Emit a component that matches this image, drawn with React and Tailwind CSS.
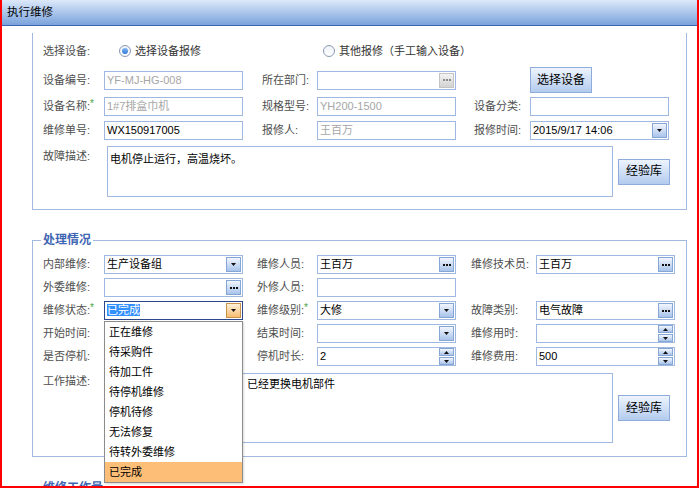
import React from "react";

// options of the open status dropdown
const statusOptions = [
  "正在维修",
  "待采购件",
  "待加工件",
  "待停机维修",
  "停机待修",
  "无法修复",
  "待转外委维修",
  "已完成",
];

function Label({ className = "", star, children }) {
  return (
    <div className={`shrink-0 whitespace-nowrap text-[#4f4f4f] ${className}`}>
      {children}
      {star && (
        <span className="relative -top-[3px] text-[10px] text-[#3fa33f]">*</span>
      )}
    </div>
  );
}

function Tri({ up }) {
  return (
    <svg width="5" height="3" viewBox="0 0 5 3">
      <path d={up ? "M0 3h5L2.5 0z" : "M0 0h5L2.5 3z"} fill="#111" />
    </svg>
  );
}

function DropBtn({ orange }) {
  return (
    <div
      className={`mr-[1px] flex h-[15px] w-[15px] shrink-0 items-center justify-center border ${
        orange
          ? "border-[#c8924a] bg-linear-to-b from-[#fff1d8] to-[#f7bd70]"
          : "border-[#86a6d6] bg-linear-to-b from-[#f2f6fd] to-[#a9c3ea]"
      }`}
    >
      <Tri />
    </div>
  );
}

function DotsBtn({ gray }) {
  return (
    <div
      className={`mr-[1px] flex h-[15px] w-[15px] shrink-0 items-center justify-center gap-[1px] border ${
        gray
          ? "border-[#c4c4c4] bg-linear-to-b from-[#f4f4f4] to-[#d2d2d2]"
          : "border-[#86a6d6] bg-linear-to-b from-[#f2f6fd] to-[#a9c3ea]"
      }`}
    >
      {[0, 1, 2].map((i) => (
        <span
          key={i}
          className={`h-[2px] w-[2px] ${gray ? "bg-[#8a8a8a]" : "bg-[#111]"}`}
        />
      ))}
    </div>
  );
}

function Spin() {
  return (
    <div className="mr-[1px] flex h-[17px] w-[15px] shrink-0 flex-col gap-[1px]">
      <div className="flex flex-1 items-center justify-center border border-[#86a6d6] bg-linear-to-b from-[#f2f6fd] to-[#a9c3ea]">
        <Tri up />
      </div>
      <div className="flex flex-1 items-center justify-center border border-[#86a6d6] bg-linear-to-b from-[#f2f6fd] to-[#a9c3ea]">
        <Tri />
      </div>
    </div>
  );
}

function Field({ value, gray, focused, children, overlay }) {
  return (
    <div
      className={`relative flex h-[19px] w-[139px] shrink-0 items-center border bg-white ${
        focused ? "border-[#2c478c]" : "border-[#9fb8e1]"
      }`}
    >
      <div
        className={`min-w-0 flex-1 truncate pl-[2px] ${
          gray ? "text-[#a6a6a6]" : "text-black"
        }`}
      >
        {value}
      </div>
      {children}
      {overlay}
    </div>
  );
}

function BlueButton({ className = "", children }) {
  return (
    <div
      className={`flex shrink-0 items-center justify-center border border-[#8dacdb] bg-linear-to-b from-[#eef4fd] to-[#b3cbee] text-[12px] text-black ${className}`}
    >
      {children}
    </div>
  );
}

function Radio({ checked }) {
  return (
    <div className="flex h-[12px] w-[12px] shrink-0 items-center justify-center rounded-full border border-[#8a9ab4] bg-linear-to-b from-[#eef2f7] to-white">
      {checked && (
        <div className="h-[6px] w-[6px] rounded-full bg-linear-to-b from-[#7fb6f2] to-[#2f7ad8]" />
      )}
    </div>
  );
}

function StatusList() {
  return (
    <div className="absolute left-[-1px] top-[19px] z-10 w-[139px] border border-[#8c8c8c] bg-white shadow-[1px_1px_2px_rgba(0,0,0,0.15)]">
      {statusOptions.map((opt) => (
        <div
          key={opt}
          className={`flex h-[20px] items-center pl-[4px] text-black ${
            opt === "已完成" ? "bg-[#fdbf78]" : ""
          }`}
        >
          {opt}
        </div>
      ))}
    </div>
  );
}

function Legend({ children }) {
  return (
    <legend className="ml-[8px] px-[2px] text-[12px] font-bold leading-[14px] text-[#3f66b3]">
      {children}
    </legend>
  );
}

export default function App() {
  return (
    <div className="h-[488px] w-[699px] overflow-hidden border-x-2 border-b-2 border-[#ff0000] bg-white font-['Liberation_Sans','Noto_Sans_CJK_SC',sans-serif] text-[11px] leading-[15px]">
      {/* title bar */}
      <div className="flex h-[26px] items-center border-b border-[#3b67b2] bg-linear-to-b from-[#dde9f9] to-[#7aa2dc] pl-[5px] text-[11.5px] text-black">
        执行维修
      </div>

      {/* device section */}
      <div className="ml-[30px] mr-[10px] mt-[7px] border-x border-b border-[#a3bae0] pb-[12px] pl-[10px] pt-[10px]">
        <div className="flex h-[16px] items-center">
          <Label className="w-[76px]">选择设备:</Label>
          <div className="flex w-[204px] shrink-0 items-center gap-[4px]">
            <Radio checked />
            <span className="text-[#333]">选择设备报修</span>
          </div>
          <div className="flex items-center gap-[4px]">
            <Radio />
            <span className="text-[#333]">其他报修（手工输入设备）</span>
          </div>
        </div>

        <div className="mt-[8px] flex h-[26px] items-center">
          <Label className="w-[61px]">设备编号:</Label>
          <Field value="YF-MJ-HG-008" gray />
          <div className="w-[19px] shrink-0" />
          <Label className="w-[55px]">所在部门:</Label>
          <Field>
            <DotsBtn gray />
          </Field>
          <div className="w-[74px] shrink-0" />
          <BlueButton className="h-[26px] w-[62px]">选择设备</BlueButton>
        </div>

        <div className="mt-[4px] flex h-[19px] items-center">
          <Label className="w-[61px]" star>
            设备名称:
          </Label>
          <Field value="1#7排盒巾机" gray />
          <div className="w-[19px] shrink-0" />
          <Label className="w-[55px]">规格型号:</Label>
          <Field value="YH200-1500" gray />
          <div className="w-[18px] shrink-0" />
          <Label className="w-[56px]">设备分类:</Label>
          <Field />
        </div>

        <div className="mt-[5px] flex h-[19px] items-center">
          <Label className="w-[61px]">维修单号:</Label>
          <Field value="WX150917005" />
          <div className="w-[19px] shrink-0" />
          <Label className="w-[55px]">报修人:</Label>
          <Field value="王百万" gray />
          <div className="w-[18px] shrink-0" />
          <Label className="w-[56px]">报修时间:</Label>
          <Field value="2015/9/17 14:06">
            <DropBtn />
          </Field>
        </div>

        <div className="mt-[6px] flex items-center">
          <Label className="mt-[3px] w-[64px] self-start">故障描述:</Label>
          <div className="h-[51px] w-[506px] shrink-0 border border-[#9fb8e1] bg-white pl-[2px] pt-[5px] text-black">
            电机停止运行，高温烧坏。
          </div>
          <BlueButton className="ml-[5px] h-[26px] w-[52px]">经验库</BlueButton>
        </div>
      </div>

      {/* handling section */}
      <fieldset className="ml-[30px] mr-[10px] mt-[23px] border border-[#a3bae0]">
        <Legend>处理情况</Legend>
        <div className="pb-[13px] pl-[10px] pt-[8px]">
          <div className="flex h-[19px] items-center">
            <Label className="w-[61px]">内部维修:</Label>
            <Field value="生产设备组">
              <DropBtn />
            </Field>
            <div className="w-[14px] shrink-0" />
            <Label className="w-[60px]">维修人员:</Label>
            <Field value="王百万">
              <DotsBtn />
            </Field>
            <div className="w-[15px] shrink-0" />
            <Label className="w-[65px]">维修技术员:</Label>
            <Field value="王百万">
              <DotsBtn />
            </Field>
          </div>

          <div className="mt-[4px] flex h-[19px] items-center">
            <Label className="w-[61px]">外委维修:</Label>
            <Field>
              <DotsBtn />
            </Field>
            <div className="w-[14px] shrink-0" />
            <Label className="w-[60px]">外修人员:</Label>
            <Field />
          </div>

          <div className="relative z-10 mt-[4px] flex h-[19px] items-center">
            <Label className="w-[61px]" star>
              维修状态:
            </Label>
            <Field
              focused
              value={<span className="bg-[#3390ff] text-white">已完成</span>}
              overlay={<StatusList />}
            >
              <DropBtn orange />
            </Field>
            <div className="w-[14px] shrink-0" />
            <Label className="w-[60px]" star>
              维修级别:
            </Label>
            <Field value="大修">
              <DropBtn />
            </Field>
            <div className="w-[15px] shrink-0" />
            <Label className="w-[65px]">故障类别:</Label>
            <Field value="电气故障">
              <DotsBtn />
            </Field>
          </div>

          <div className="mt-[4px] flex h-[19px] items-center">
            <Label className="w-[61px]">开始时间:</Label>
            <Field>
              <DropBtn />
            </Field>
            <div className="w-[14px] shrink-0" />
            <Label className="w-[60px]">结束时间:</Label>
            <Field>
              <DropBtn />
            </Field>
            <div className="w-[15px] shrink-0" />
            <Label className="w-[65px]">维修用时:</Label>
            <Field>
              <Spin />
            </Field>
          </div>

          <div className="mt-[4px] flex h-[19px] items-center">
            <Label className="w-[61px]">是否停机:</Label>
            <Field>
              <DropBtn />
            </Field>
            <div className="w-[14px] shrink-0" />
            <Label className="w-[60px]">停机时长:</Label>
            <Field value="2">
              <Spin />
            </Field>
            <div className="w-[15px] shrink-0" />
            <Label className="w-[65px]">维修费用:</Label>
            <Field value="500">
              <Spin />
            </Field>
          </div>

          <div className="mt-[7px] flex items-center">
            <Label className="mt-[1px] w-[64px] self-start">工作描述:</Label>
            <div className="h-[70px] w-[506px] shrink-0 border border-[#9fb8e1] bg-white pl-[2px] pt-[3px] indent-[137px] text-black">
              已经更换电机部件
            </div>
            <BlueButton className="ml-[5px] h-[26px] w-[52px]">经验库</BlueButton>
          </div>
        </div>
      </fieldset>

      {/* workload section, mostly below the fold */}
      <fieldset className="ml-[30px] mr-[10px] mt-[24px] h-[60px] border border-[#a3bae0]">
        <Legend>维修工作量</Legend>
      </fieldset>
    </div>
  );
}
